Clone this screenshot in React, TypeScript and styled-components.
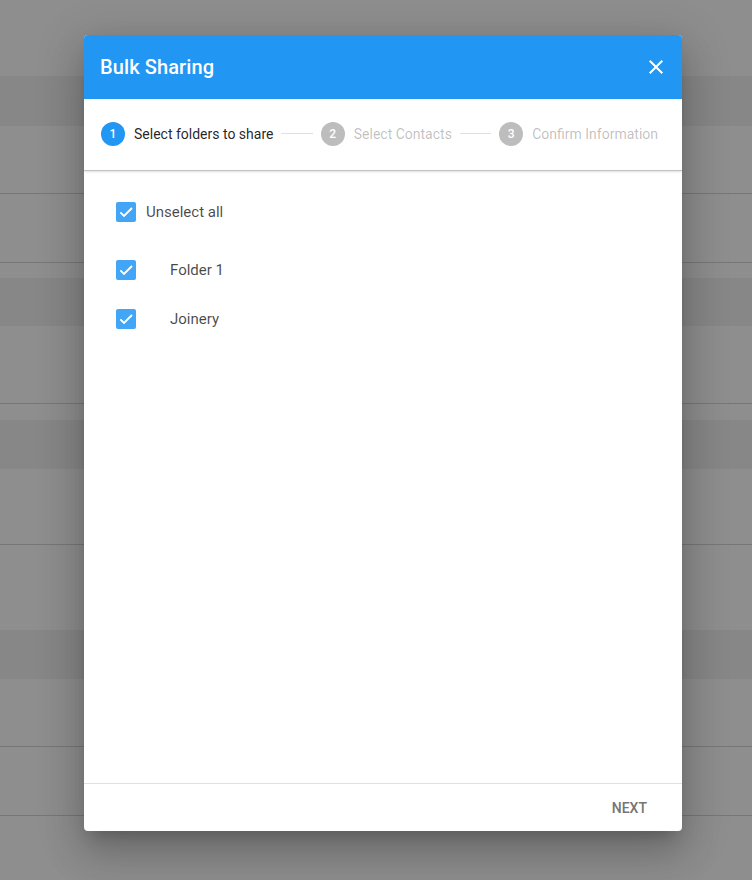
import React from 'react';
import styled, { createGlobalStyle } from 'styled-components';

const GlobalStyle = createGlobalStyle`
  html, body {
    margin: 0;
    padding: 0;
    background: #8e8e8e;
    font-family: Roboto, "Noto Sans", Arial, sans-serif;
  }
  * { box-sizing: border-box; }
`;

const Page = styled.div`
  position: relative;
  width: 752px;
  height: 880px;
  overflow: hidden;
  background: #8e8e8e;
`;

const Section = styled.div<{ $top: number }>`
  margin-top: ${p => p.$top}px;
`;

const Band = styled.div<{ $h: number }>`
  height: ${p => p.$h}px;
  background: #878787;
`;

const Row = styled.div<{ $h: number }>`
  height: ${p => p.$h}px;
  border-bottom: 1px solid #777777;
`;

const Dialog = styled.div`
  position: absolute;
  left: 84px;
  top: 35px;
  width: 598px;
  height: 796px;
  background: #fff;
  border-radius: 4px;
  overflow: hidden;
  display: flex;
  flex-direction: column;
  box-shadow: 0 11px 15px -7px rgba(0, 0, 0, 0.2), 0 24px 38px 3px rgba(0, 0, 0, 0.14),
    0 9px 46px 8px rgba(0, 0, 0, 0.12);
`;

const Header = styled.div`
  height: 64px;
  background: #2196f3;
  display: flex;
  align-items: center;
  justify-content: space-between;
  padding: 0 14px 0 16px;
  color: #fff;
`;

const Title = styled.h2`
  margin: 0;
  font-size: 20px;
  font-weight: 500;
  letter-spacing: 0.1px;
`;

const CloseButton = styled.button`
  width: 24px;
  height: 24px;
  padding: 0;
  border: none;
  background: none;
  color: #fff;
  cursor: pointer;
  display: flex;
  align-items: center;
  justify-content: center;
`;

const Stepper = styled.div`
  height: 72px;
  display: flex;
  align-items: center;
  padding: 0 24px 2px 17px;
  border-bottom: 1px solid #c2c2c2;
  box-shadow: 0 1px 2px rgba(0, 0, 0, 0.12);
  position: relative;
  z-index: 1;
`;

const Step = styled.div`
  display: flex;
  align-items: center;
  gap: 9px;
  flex-shrink: 0;
`;

const StepCircle = styled.span<{ $active?: boolean }>`
  width: 24px;
  height: 24px;
  border-radius: 50%;
  background: ${p => (p.$active ? '#2196f3' : '#bdbdbd')};
  color: #fff;
  font-size: 12px;
  font-weight: 500;
  display: flex;
  align-items: center;
  justify-content: center;
`;

const StepLabel = styled.span<{ $active?: boolean }>`
  font-size: 14px;
  color: ${p => (p.$active ? 'rgba(0, 0, 0, 0.87)' : 'rgba(0, 0, 0, 0.26)')};
`;

const Connector = styled.span`
  flex: 1;
  height: 1px;
  background: #e0e0e0;
  margin: 0 8px;
`;

const Content = styled.div`
  flex: 1;
  padding: 31px 0 0 32px;
  display: flex;
  flex-direction: column;
`;

const CheckRow = styled.label<{ $indent?: boolean; $gapAfter: number }>`
  display: flex;
  align-items: center;
  height: 20px;
  margin-bottom: ${p => p.$gapAfter}px;
  font-size: 15px;
  color: rgba(0, 0, 0, 0.72);
  cursor: pointer;
  gap: ${p => (p.$indent ? '34px' : '10px')};
`;

const Box = styled.span`
  width: 20px;
  height: 20px;
  border-radius: 2px;
  background: #42a5f5;
  display: flex;
  align-items: center;
  justify-content: center;
`;

const Footer = styled.div`
  height: 48px;
  border-top: 1px solid #e0e0e0;
  display: flex;
  align-items: center;
  justify-content: flex-end;
  padding-right: 20px;
`;

const NextButton = styled.button`
  border: none;
  background: none;
  font-family: inherit;
  font-size: 14px;
  font-weight: 500;
  color: #757575;
  text-transform: uppercase;
  padding: 8px 15px;
  cursor: pointer;
`;

const Check = () => (
  <Box>
    <svg width="16" height="16" viewBox="0 0 24 24">
      <path d="M3.5 12.5l5.5 5.5L21 6" fill="none" stroke="#fff" strokeWidth="2.8" />
    </svg>
  </Box>
);

const steps = ['Select folders to share', 'Select Contacts', 'Confirm Information'];

export default function App() {
  return (
    <Page>
      <GlobalStyle />
      <Section $top={76}>
        <Band $h={50} />
        <Row $h={68} />
        <Row $h={69} />
      </Section>
      <Section $top={15}>
        <Band $h={48} />
        <Row $h={78} />
      </Section>
      <Section $top={16}>
        <Band $h={49} />
        <Row $h={76} />
      </Section>
      <Section $top={85}>
        <Band $h={49} />
        <Row $h={68} />
        <Row $h={69} />
      </Section>

      <Dialog>
        <Header>
          <Title>Bulk Sharing</Title>
          <CloseButton aria-label="close">
            <svg width="24" height="24" viewBox="0 0 24 24">
              <path
                fill="currentColor"
                d="M19 6.41 17.59 5 12 10.59 6.41 5 5 6.41 10.59 12 5 17.59 6.41 19 12 13.41 17.59 19 19 17.59 13.41 12z"
              />
            </svg>
          </CloseButton>
        </Header>
        <Stepper>
          {steps.map((s, i) => (
            <React.Fragment key={s}>
              {i > 0 && <Connector />}
              <Step>
                <StepCircle $active={i === 0}>{i + 1}</StepCircle>
                <StepLabel $active={i === 0}>{s}</StepLabel>
              </Step>
            </React.Fragment>
          ))}
        </Stepper>
        <Content>
          <CheckRow $gapAfter={38}>
            <Check />
            Unselect all
          </CheckRow>
          <CheckRow $indent $gapAfter={29}>
            <Check />
            Folder 1
          </CheckRow>
          <CheckRow $indent $gapAfter={0}>
            <Check />
            Joinery
          </CheckRow>
        </Content>
        <Footer>
          <NextButton>Next</NextButton>
        </Footer>
      </Dialog>
    </Page>
  );
}
